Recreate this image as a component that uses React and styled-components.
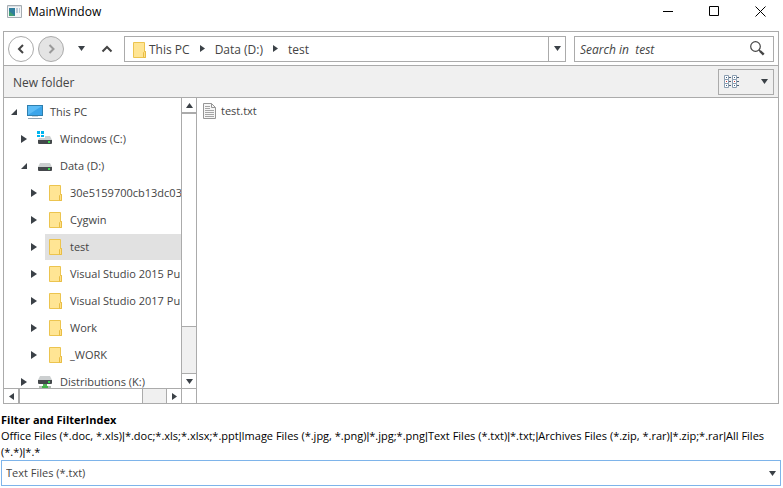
import React from "react";
import styled, { createGlobalStyle } from "styled-components";

const line = "#ababab";
const ink = "#444444";

const GlobalStyle = createGlobalStyle`
  *, *::before, *::after { box-sizing: border-box; }
  body {
    margin: 0;
    background: #fff;
    color: ${ink};
    font-family: "Open Sans", "Noto Sans", sans-serif;
    font-size: 11px;
    line-height: 16px;
  }
  button, input, select { font: inherit; color: inherit; margin: 0; }
  svg { display: block; flex: none; }
`;

const Window = styled.div`
  display: flex;
  flex-direction: column;
  height: 100vh;
  min-height: 300px;
`;

const TitleBar = styled.header`
  display: flex;
  align-items: center;
  flex: none;
  height: 31px;
  padding: 0 0 8px 7px;
  color: #000;
`;

const Title = styled.h1`
  flex: 1;
  margin: 0 0 0 6px;
  font-size: 12px;
  font-weight: 400;
`;

const CaptionButton = styled.button`
  display: flex;
  align-items: center;
  justify-content: center;
  width: 46px;
  height: 23px;
  padding: 0;
  border: 0;
  background: none;
`;

const Explorer = styled.main`
  display: flex;
  flex-direction: column;
  flex: 1;
  min-height: 0;
  margin: 0 4px 0 3px;
  border: 1px solid ${line};
`;

const NavBar = styled.nav`
  display: flex;
  align-items: center;
  flex: none;
  height: 33px;
  padding: 0 4px;
`;

const RoundButton = styled.button`
  display: flex;
  align-items: center;
  justify-content: center;
  width: 26px;
  height: 26px;
  margin-right: 4px;
  padding: 0;
  border: 1px solid ${line};
  border-radius: 50%;
  background: ${(p) => (p.disabled ? "#e4e4e4" : "#fff")};
  color: ${(p) => (p.disabled ? "#9a9a9a" : ink)};
`;

const GlyphButton = styled.button`
  display: flex;
  align-items: center;
  justify-content: center;
  width: 26px;
  height: 26px;
  padding: 0;
  border: 0;
  background: none;
`;

const AddressBar = styled.div`
  display: flex;
  align-items: stretch;
  flex: 1;
  height: 26px;
  margin: 0 8px 0 4px;
  border: 1px solid ${line};
`;

const Crumbs = styled.div`
  display: flex;
  align-items: center;
  flex: 1;
  padding-left: 7px;
  font-size: 12px;
`;

const Crumb = styled.button`
  display: flex;
  align-items: center;
  gap: 3px;
  padding: 2px 0 0;
  border: 0;
  background: none;
`;

const CrumbArrow = styled.span`
  display: flex;
  justify-content: center;
  width: 25px;
`;

const DropButton = styled.button`
  display: flex;
  align-items: center;
  justify-content: center;
  width: 17px;
  padding: 0;
  border: 0;
  border-left: 1px solid ${line};
  background: #fff;
`;

const SearchBox = styled.label`
  display: flex;
  align-items: center;
  width: 200px;
  height: 26px;
  padding: 0 8px 0 5px;
  border: 1px solid ${line};
`;

const SearchInput = styled.input`
  flex: 1;
  min-width: 0;
  padding: 2px 0 0;
  border: 0;
  outline: 0;
  background: none;
  font-size: 12px;
  font-style: italic;
  &::placeholder { color: ${ink}; opacity: 1; }
`;

const Toolbar = styled.div`
  display: flex;
  align-items: center;
  justify-content: space-between;
  flex: none;
  height: 33px;
  padding: 0 4px 0 9px;
  border: solid ${line};
  border-width: 1px 0;
  background: #f0f0f0;
`;

const TextButton = styled.button`
  padding: 2px 0 0;
  border: 0;
  background: none;
  font-size: 12px;
`;

const ViewButton = styled.button`
  display: flex;
  align-items: center;
  justify-content: space-between;
  width: 56px;
  height: 26px;
  padding: 0 5px;
  border: 1px solid ${line};
  background: #f0f0f0;
`;

const Panes = styled.div`
  display: flex;
  flex: 1;
  min-height: 0;
`;

const TreePane = styled.aside`
  display: grid;
  grid-template-columns: minmax(0, 1fr) 15px;
  grid-template-rows: minmax(0, 1fr) 15px;
  flex: none;
  width: 193px;
  border-right: 1px solid ${line};
`;

const Tree = styled.ul`
  margin: 0;
  padding: 0;
  overflow: hidden;
  list-style: none;
`;

const TreeItem = styled.li`
  display: flex;
  align-items: center;
  height: 27px;
  padding-left: ${(p) => 1 + p.$level * 10}px;
`;

const Expander = styled.button`
  display: flex;
  align-items: center;
  justify-content: center;
  flex: none;
  width: 18px;
  height: 26px;
  margin-right: 2px;
  padding: 0;
  border: 0;
  background: none;
`;

const TreeLabel = styled.button`
  display: flex;
  align-items: center;
  flex: 1 0 auto;
  height: 26px;
  padding: 0;
  border: 0;
  background: ${(p) => (p.$selected ? "#e1e1e1" : "none")};
  white-space: nowrap;
`;

const IconSlot = styled.span`
  display: flex;
  justify-content: center;
  width: 20px;
  margin-right: 5px;
`;

const ScrollBar = styled.div`
  display: flex;
  flex-direction: ${(p) => (p.$vertical ? "column" : "row")};
  border: solid ${line};
  border-width: ${(p) => (p.$vertical ? "0 0 0 1px" : "1px 0 0")};
  background: #f0f0f0;
`;

const ScrollButton = styled.button`
  display: flex;
  align-items: center;
  justify-content: center;
  flex: none;
  width: 14px;
  height: 14px;
  padding: 0;
  border: 0;
  background: #fff;
`;

const Thumb = styled.div`
  flex: ${(p) => p.$size};
  border: solid ${line};
  border-width: ${(p) => (p.$vertical ? "2px 0 1px" : "0 1px 0 2px")};
  background: #fff;
`;

const Track = styled.div`
  flex: ${(p) => p.$size};
  border: solid ${line};
  border-width: ${(p) => (p.$vertical ? "0 0 1px" : "0 1px 0 0")};
`;

const Corner = styled.div`
  border: solid ${line};
  border-width: 1px 0 0 1px;
`;

const Files = styled.ul`
  flex: 1;
  margin: 0;
  padding: 0 6px;
  list-style: none;
`;

const FileButton = styled.button`
  display: flex;
  align-items: center;
  gap: 5px;
  height: 26px;
  padding: 0;
  border: 0;
  background: none;
`;

const FilterSection = styled.section`
  flex: none;
  padding: 8px 2px 2px 1px;
  color: #000;
`;

const FilterTitle = styled.h2`
  margin: 0;
  font-size: 11px;
  font-weight: 700;
`;

const FilterText = styled.p`
  margin: 0;
`;

const Bar = styled.span`
  font-family: "Liberation Sans", sans-serif;
  line-height: 1;
`;

const SelectFrame = styled.div`
  display: grid;
  align-items: center;
  color: ${ink};
  & > * { grid-area: 1 / 1; }
  & > svg { justify-self: end; margin-right: 5px; pointer-events: none; }
`;

const FilterSelect = styled.select`
  width: 100%;
  height: 26px;
  padding: 0 20px 0 4px;
  border: 1px solid #7eb4ea;
  border-radius: 0;
  outline: 0;
  background: #fff;
  appearance: none;
`;

const arrows = {
  down: "M0 1H7L3.5 6Z",
  up: "M0 6H7L3.5 1Z",
  left: "M6 0V7L1 3.5Z",
  right: "M1 0V7L6 3.5Z",
};

const Arrow = ({ to }) => (
  <svg width="7" height="7" viewBox="0 0 7 7" fill="#3b4147" aria-hidden="true">
    <path d={arrows[to]} />
  </svg>
);

const ExpandArrow = ({ open }) => (
  <svg width="8" height="8" viewBox="0 0 8 8" fill="#3b4147" aria-hidden="true">
    <path d={open ? "M7 1V7H1Z" : "M1 0V8L7 4Z"} />
  </svg>
);

const Chevron = ({ d }) => (
  <svg width="12" height="12" viewBox="0 0 12 12" fill="none" stroke="currentColor" strokeWidth="2" aria-hidden="true">
    <path d={d} />
  </svg>
);

const FolderIcon = () => (
  <svg width="14" height="16" viewBox="0 0 14 16" aria-hidden="true">
    <path d="M1.5 .5H12.5V9.5H13.5V15.5H1.5Z" fill="#ffe594" stroke="#ecc44f" />
    <path d="M11.5 15.5V10.5L12.5 9.5H13.5V15.5Z" fill="#ffe088" stroke="#e8bd45" />
  </svg>
);

const ComputerIcon = () => (
  <svg width="16" height="16" viewBox="0 0 16 16" aria-hidden="true">
    <path d="M0 1H16V12H0Z" fill="#2f7fae" />
    <path d="M1 2H15V11H1Z" fill="#3ba5ea" />
    <path d="M1 11V2H15Z" fill="#5cbcf6" />
    <path d="M5 12H11V13H5Z" fill="#c9d5dd" />
    <path d="M1 14H15V15H1Z" fill="#8fa3b1" />
  </svg>
);

const DriveIcon = ({ kind }) => (
  <svg width="16" height="16" viewBox="0 0 16 16" aria-hidden="true">
    {kind === "windows" && (
      <path d="M0 0H3V3H0ZM4 0H7V3H4ZM0 4H3V6H0ZM4 4H7V6H4Z" fill="#00b4ef" />
    )}
    <g transform={kind === "network" ? "translate(0 -3)" : undefined}>
      <path d={kind === "windows" ? "M8 5H13L15 9H1L2 7H8Z" : "M3 5H13L15 9H1Z"} fill="#cccfd0" />
      <path d="M1 9H15V12Q15 13 14 13H2Q1 13 1 12Z" fill="#44484b" />
      <path d="M11 10H13V12H11Z" fill="#36dc4c" />
    </g>
    {kind === "network" && (
      <>
        <path d="M6 10H10V12H6Z" fill="#56b35c" />
        <path d="M5 12H11V15H5Z" fill="#43b64a" />
        <path d="M2 12H5V14H2ZM11 12H14V14H11Z" fill="#b4bdb5" />
      </>
    )}
  </svg>
);

const TextFileIcon = () => (
  <svg width="13" height="16" viewBox="0 0 13 16" fill="none" aria-hidden="true">
    <path d="M.5 .5H8.5L12.5 4.5V15.5H.5Z" fill="#f6f6f6" stroke="#969696" />
    <path d="M8.5 .5V4.5H12.5" stroke="#969696" />
    <path d="M2 3.5H7M2 5.5H7M2 7.5H11M2 9.5H11M2 11.5H11M2 13.5H11" stroke="#a5a5a5" />
  </svg>
);

const AppIcon = () => (
  <svg width="15" height="13" viewBox="0 0 15 13" aria-hidden="true">
    <path d="M.5 .5H14.5V12.5H.5Z" fill="#f3f5f7" stroke="#a5acb2" />
    <path d="M1 1H14V2H1Z" fill="#dce1e5" />
    <path d="M2 3H8V11H2Z" fill="#2f7d9c" />
    <path d="M2 11V6L8 11Z" fill="#3e9e72" />
    <path d="M9 3H11V8H9ZM12 3H13V8H12Z" fill="#b9c8d6" />
  </svg>
);

const SearchIcon = () => (
  <svg width="15" height="15" viewBox="0 0 15 15" fill="none" stroke="#444" aria-hidden="true">
    <circle cx="5.5" cy="5.5" r="4.8" strokeWidth="1.2" />
    <path d="M9 9L10.5 10.5" strokeWidth="1.2" />
    <path d="M10 10L13.7 13.7" strokeWidth="2.4" />
  </svg>
);

const ViewIcon = () => (
  <svg width="16" height="14" viewBox="0 0 16 14" fill="none" aria-hidden="true">
    {[0, 8].map((x) =>
      [0, 4, 8].map((y) => (
        <g key={`${x}-${y}`}>
          <path d={`M${x + 0.5} ${y + 0.5}h4v4h-4Z`} fill="#fff" stroke="#8a9db0" />
          <path d={`M${x + 2} ${y + 2}h1v1h-1Z`} fill={y === 4 ? "#d23c3c" : "#3f5f80"} />
          <path d={`M${x + 5} ${y + 2.5}h2`} stroke="#4d6177" />
        </g>
      ))
    )}
  </svg>
);

const nodes = [
  { name: "This PC", level: 0, icon: <ComputerIcon />, open: true },
  { name: "Windows (C:)", level: 1, icon: <DriveIcon kind="windows" /> },
  { name: "Data (D:)", level: 1, icon: <DriveIcon />, open: true },
  { name: "30e5159700cb13dc03", level: 2, icon: <FolderIcon /> },
  { name: "Cygwin", level: 2, icon: <FolderIcon /> },
  { name: "test", level: 2, icon: <FolderIcon />, selected: true },
  { name: "Visual Studio 2015 Pu", level: 2, icon: <FolderIcon /> },
  { name: "Visual Studio 2017 Pu", level: 2, icon: <FolderIcon /> },
  { name: "Work", level: 2, icon: <FolderIcon /> },
  { name: "_WORK", level: 2, icon: <FolderIcon /> },
  { name: "Distributions (K:)", level: 1, icon: <DriveIcon kind="network" /> },
];

const filter =
  "Office Files (*.doc, *.xls)|*.doc;*.xls;*.xlsx;*.ppt|Image Files (*.jpg, *.png)|*.jpg;*.png|Text Files (*.txt)|*.txt;|Archives Files (*.zip, *.rar)|*.zip;*.rar|All Files (*.*)|*.*";

export default function App() {
  return (
    <>
      <GlobalStyle />
      <Window>
        <TitleBar>
          <AppIcon />
          <Title>MainWindow</Title>
          <CaptionButton aria-label="Minimize">
            <svg width="11" height="11" stroke="#000"><path d="M0 5.5H10" /></svg>
          </CaptionButton>
          <CaptionButton aria-label="Maximize">
            <svg width="11" height="11" fill="none" stroke="#000"><path d="M.5 .5H9.5V9.5H.5Z" /></svg>
          </CaptionButton>
          <CaptionButton aria-label="Close">
            <svg width="11" height="11" stroke="#000"><path d="M.5 .5L10.5 10.5M10.5 .5L.5 10.5" /></svg>
          </CaptionButton>
        </TitleBar>

        <Explorer>
          <NavBar aria-label="Location">
            <RoundButton aria-label="Back"><Chevron d="M8 2L4 6L8 10" /></RoundButton>
            <RoundButton aria-label="Forward" disabled><Chevron d="M4.5 2L8.5 6L4.5 10" /></RoundButton>
            <GlyphButton aria-label="Recent locations"><Arrow to="down" /></GlyphButton>
            <GlyphButton aria-label="Up one level"><Chevron d="M1.5 8.5L6 4L10.5 8.5" /></GlyphButton>
            <AddressBar>
              <Crumbs>
                <Crumb><FolderIcon />This PC</Crumb>
                <CrumbArrow><Arrow to="right" /></CrumbArrow>
                <Crumb>Data (D:)</Crumb>
                <CrumbArrow><Arrow to="right" /></CrumbArrow>
                <Crumb>test</Crumb>
              </Crumbs>
              <DropButton aria-label="Previous locations"><Arrow to="down" /></DropButton>
            </AddressBar>
            <SearchBox>
              <SearchInput type="text" aria-label="Search" placeholder="Search in  test" />
              <SearchIcon />
            </SearchBox>
          </NavBar>

          <Toolbar>
            <TextButton>New folder</TextButton>
            <ViewButton aria-label="Change view"><ViewIcon /><Arrow to="down" /></ViewButton>
          </Toolbar>

          <Panes>
            <TreePane>
              <Tree role="tree" aria-label="Folders">
                {nodes.map((n) => (
                  <TreeItem key={n.name} $level={n.level} role="treeitem" aria-expanded={!!n.open} aria-selected={!!n.selected}>
                    <Expander aria-label={`Toggle ${n.name}`}><ExpandArrow open={n.open} /></Expander>
                    <TreeLabel $selected={n.selected}>
                      <IconSlot>{n.icon}</IconSlot>
                      {n.name}
                    </TreeLabel>
                  </TreeItem>
                ))}
              </Tree>
              <ScrollBar $vertical>
                <ScrollButton aria-label="Scroll up"><Arrow to="up" /></ScrollButton>
                <Thumb $vertical $size={214} />
                <Track $vertical $size={47} />
                <ScrollButton aria-label="Scroll down"><Arrow to="down" /></ScrollButton>
              </ScrollBar>
              <ScrollBar>
                <ScrollButton aria-label="Scroll left"><Arrow to="left" /></ScrollButton>
                <Thumb $size={125} />
                <Track $size={24} />
                <ScrollButton aria-label="Scroll right"><Arrow to="right" /></ScrollButton>
              </ScrollBar>
              <Corner />
            </TreePane>
            <Files aria-label="Files">
              <li><FileButton><TextFileIcon />test.txt</FileButton></li>
            </Files>
          </Panes>
        </Explorer>

        <FilterSection>
          <FilterTitle id="filter-title">Filter and FilterIndex</FilterTitle>
          <FilterText>
            {filter.split("|").map((part, i) => (
              <React.Fragment key={i}>
                {i > 0 && <Bar>|</Bar>}
                {part}
              </React.Fragment>
            ))}
          </FilterText>
          <SelectFrame>
            <FilterSelect aria-labelledby="filter-title" defaultValue="Text Files (*.txt)">
              <option>Office Files (*.doc, *.xls)</option>
              <option>Image Files (*.jpg, *.png)</option>
              <option>Text Files (*.txt)</option>
              <option>Archives Files (*.zip, *.rar)</option>
              <option>All Files (*.*)</option>
            </FilterSelect>
            <Arrow to="down" />
          </SelectFrame>
        </FilterSection>
      </Window>
    </>
  );
}
